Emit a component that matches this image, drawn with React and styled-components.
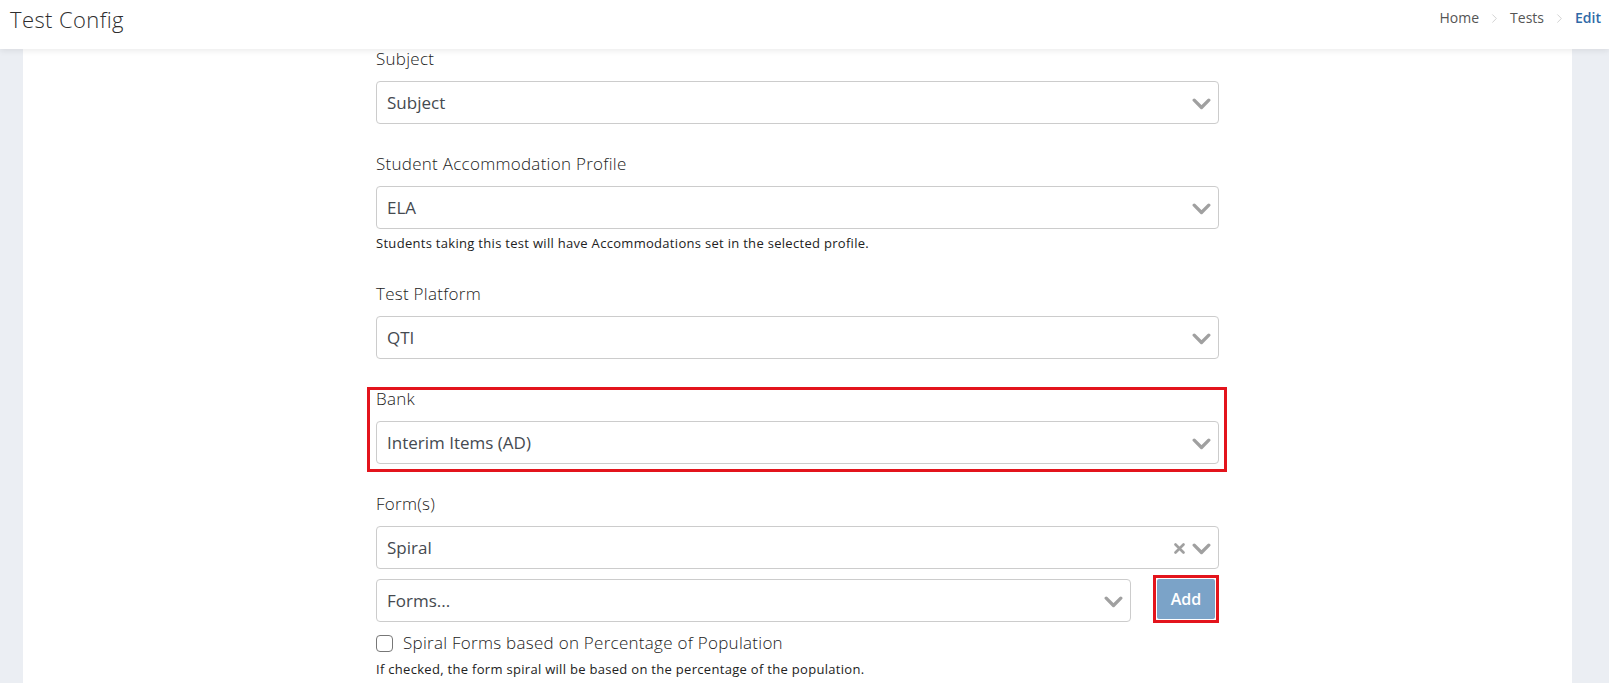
import React from "react";
import styled, { createGlobalStyle } from "styled-components";
import { ChevronRight } from "lucide-react";

const GlobalStyle = createGlobalStyle`
  html, body {
    margin: 0;
    padding: 0;
    background: #ebeef3;
    font-family: "Open Sans", "Liberation Sans", sans-serif;
    color: #333;
    overflow: hidden;
  }
`;

const Chevron = () => (
  <svg width="19" height="12" viewBox="0 0 19 12" fill="none">
    <path d="M2.2 2.2 L9.5 9.5 L16.8 2.2" stroke="#a0a0a0" strokeWidth="3.3" strokeLinecap="round" strokeLinejoin="round" />
  </svg>
);

const Cross = () => (
  <svg width="11" height="11" viewBox="0 0 11 11" fill="none">
    <path d="M1.5 1.5 L9.5 9.5 M9.5 1.5 L1.5 9.5" stroke="#a0a0a0" strokeWidth="2.6" strokeLinecap="round" />
  </svg>
);

const Select = ({ value, clearable, grow }) => (
  <SelectBox $grow={grow}>
    <SelectValue>{value}</SelectValue>
    <SelectIcons>
      {clearable && <Cross />}
      <Chevron />
    </SelectIcons>
  </SelectBox>
);

const App = () => {
  return (
    <Page>
      <GlobalStyle />
      <Header>
        <Title>Test Config</Title>
        <Crumbs>
          <Crumb>Home</Crumb>
          <ChevronRight size={15} color="#c8c8c8" strokeWidth={1.3} />
          <Crumb>Tests</Crumb>
          <ChevronRight size={15} color="#c8c8c8" strokeWidth={1.3} />
          <Crumb $active>Edit</Crumb>
        </Crumbs>
      </Header>
      <Body>
        <Card>
          <Form>
            <Group>
              <Label>Subject</Label>
              <Select value="Subject" />
            </Group>
            <Group>
              <Label>Student Accommodation Profile</Label>
              <Select value="ELA" />
              <Help>Students taking this test will have Accommodations set in the selected profile.</Help>
            </Group>
            <Group>
              <Label>Test Platform</Label>
              <Select value="QTI" />
            </Group>
            <Group $marked>
              <Label>Bank</Label>
              <Select value="Interim Items (AD)" />
            </Group>
            <Group>
              <Label>Form(s)</Label>
              <Select value="Spiral" clearable />
              <AddRow>
                <Select value="Forms..." grow />
                <AddWrap>
                  <AddButton>Add</AddButton>
                </AddWrap>
              </AddRow>
              <CheckRow>
                <CheckBox />
                <CheckLabel>Spiral Forms based on Percentage of Population</CheckLabel>
              </CheckRow>
              <Help $gap={5}>If checked, the form spiral will be based on the percentage of the population.</Help>
            </Group>
          </Form>
        </Card>
      </Body>
    </Page>
  );
};
export default App;

const Page = styled.div`
  display: flex;
  flex-direction: column;
  height: 683px;
`;
const Header = styled.header`
  position: relative;
  z-index: 2;
  height: 49px;
  flex-shrink: 0;
  display: flex;
  align-items: flex-start;
  justify-content: space-between;
  background: #fff;
  box-shadow: 0 2px 6px rgba(0, 0, 0, 0.08);
  padding: 0 8px 0 10px;
`;
const Title = styled.h1`
  margin: 4px 0 0;
  font-size: 22px;
  line-height: 30px;
  font-weight: 300;
  letter-spacing: 0.4px;
  color: #2e2e2e;
`;
const Crumbs = styled.nav`
  display: flex;
  align-items: center;
  gap: 8px;
  margin-top: 8px;
`;
const Crumb = styled.span`
  font-size: 14px;
  line-height: 20px;
  color: ${(p) => (p.$active ? "#2f6aa7" : "#555")};
  font-weight: ${(p) => (p.$active ? 600 : 400)};
`;
const Body = styled.main`
  flex: 1;
  display: flex;
  padding: 0 37px 0 23px;
`;
const Card = styled.section`
  flex: 1;
  background: #fff;
  display: flex;
  justify-content: center;
`;
const Form = styled.div`
  width: 843px;
`;
const Group = styled.div`
  position: relative;
  margin-bottom: 30px;

  ${(p) =>
    p.$marked &&
    `
    &::after {
      content: "";
      position: absolute;
      top: -2px;
      left: -9px;
      right: -8px;
      bottom: -8px;
      border: 3px solid #e3141c;
      pointer-events: none;
    }
  `}
`;
const Label = styled.div`
  font-size: 17px;
  line-height: 20px;
  font-weight: 300;
  letter-spacing: 0.27px;
  color: #222;
  margin-bottom: 12px;
`;
const SelectBox = styled.div`
  box-sizing: border-box;
  height: 43px;
  display: flex;
  align-items: center;
  justify-content: space-between;
  border: 1px solid #cccccc;
  border-radius: 4px;
  padding: 0 7px 0 10px;
  background: #fff;
  flex: ${(p) => (p.$grow ? 1 : "none")};
`;
const SelectValue = styled.span`
  font-size: 17px;
  color: #454a50;
`;
const SelectIcons = styled.span`
  display: flex;
  align-items: center;
  gap: 7px;
  padding-top: 2px;
`;
const Help = styled.div`
  margin-top: ${(p) => p.$gap || 5}px;
  padding-bottom: 2px;
  font-size: 13px;
  line-height: 18px;
  letter-spacing: 0.3px;
  color: #222;
`;
const AddRow = styled.div`
  display: flex;
  align-items: flex-start;
  gap: 22px;
  margin-top: 10px;
`;
const AddWrap = styled.div`
  margin-top: -4px;
  padding: 1px;
  border: 3px solid #e3141c;
`;
const AddButton = styled.button`
  display: block;
  width: 58px;
  height: 40px;
  border: none;
  border-radius: 2px;
  background: #7ba3c8;
  color: #fff;
  font-family: inherit;
  font-size: 16px;
  font-weight: 600;
  padding: 0;
`;
const CheckRow = styled.div`
  display: flex;
  align-items: center;
  gap: 10px;
  margin-top: 8px;
`;
const CheckBox = styled.span`
  box-sizing: border-box;
  width: 17px;
  height: 17px;
  border: 1px solid #777;
  border-radius: 4px;
  background: #fff;
`;
const CheckLabel = styled.span`
  font-size: 17px;
  line-height: 24px;
  font-weight: 300;
  letter-spacing: 0.27px;
  color: #222;
`;
